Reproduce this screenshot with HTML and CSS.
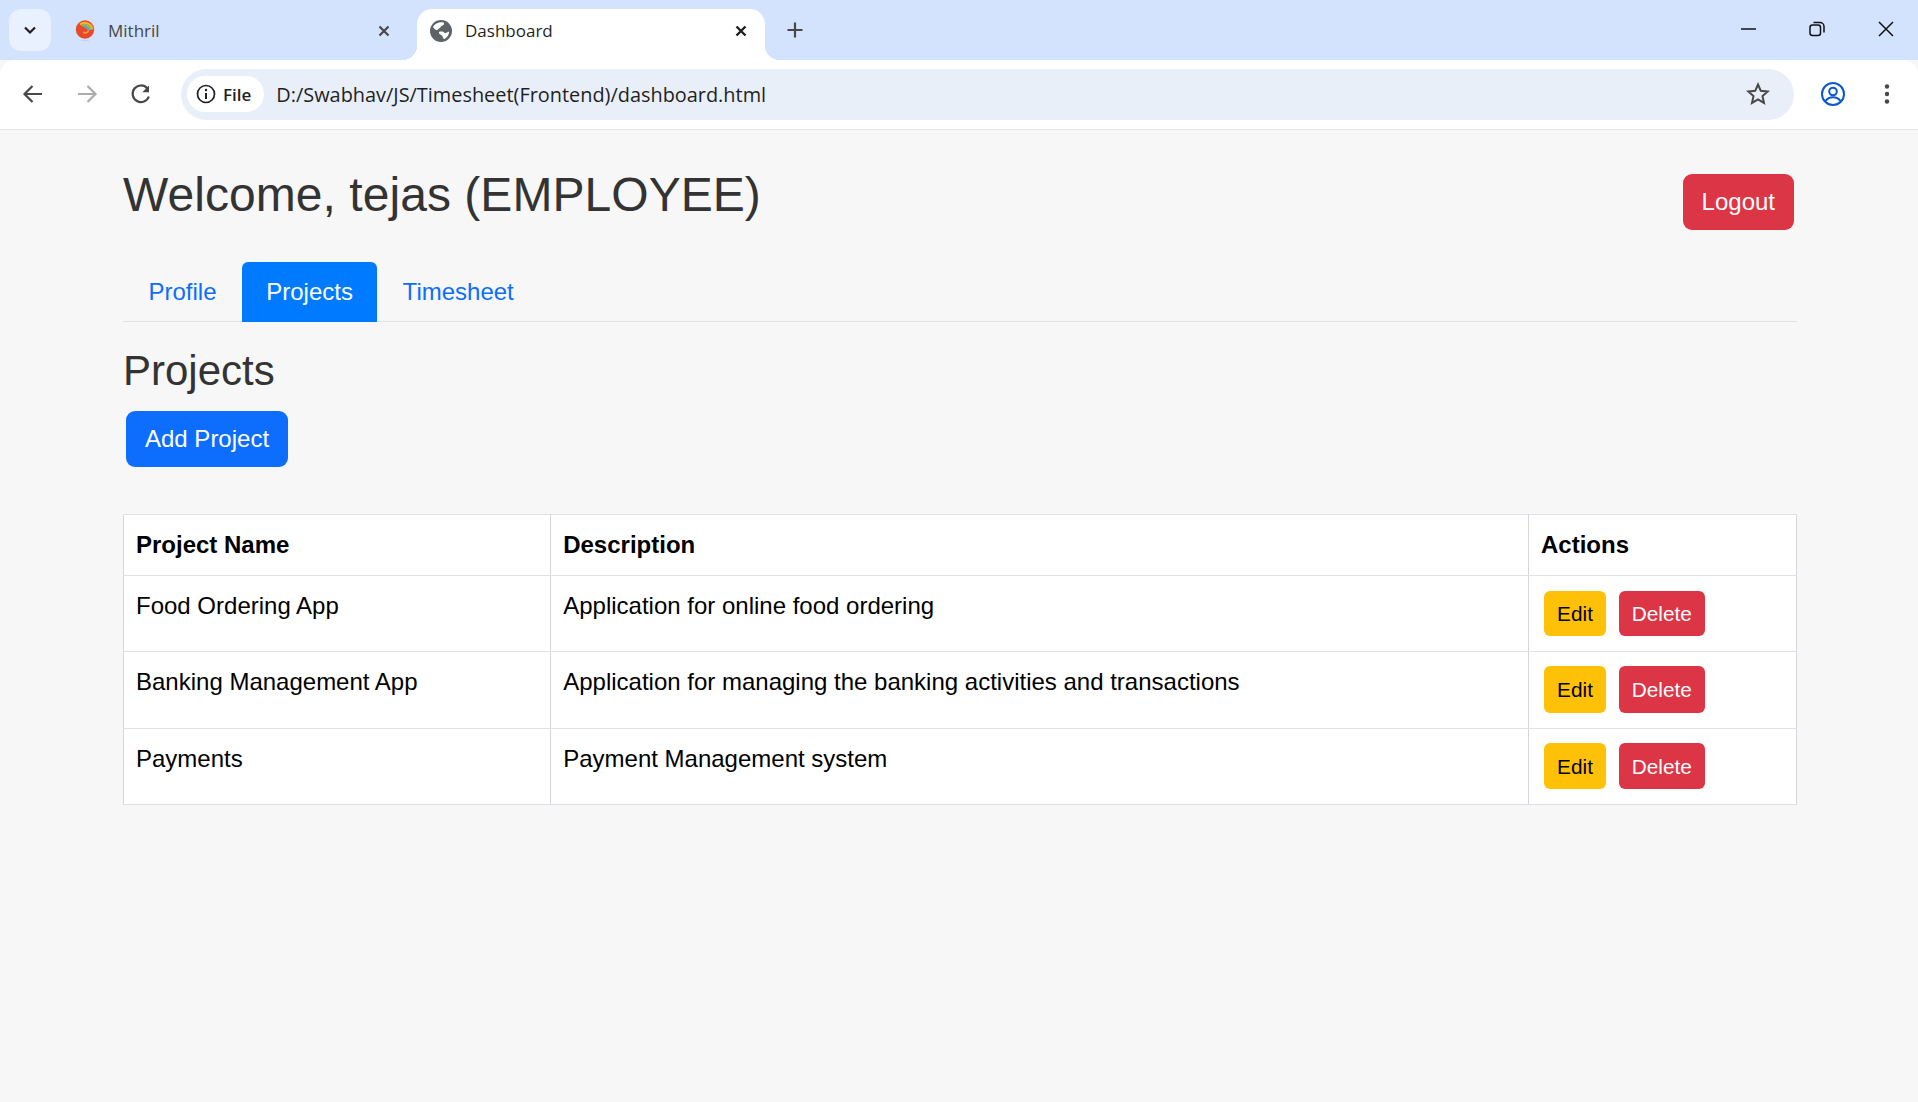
FILE: index.html
```html
<!DOCTYPE html>
<html lang="en">
<head>
    <meta charset="UTF-8">
    <title>Dashboard</title>
    <link rel="stylesheet" href="styles.css">
</head>
<body>
    <div class="tabstrip">
        <div class="tab-search">
            <svg width="18" height="18" viewBox="0 0 18 18"><path d="M4 6.500l5 5 5-5" fill="none" stroke="#1f1f1f" stroke-width="2.200"/></svg>
        </div>
        <div class="tab">
            <svg class="favicon" width="20" height="22" viewBox="0 0 20 22">
                <circle cx="10" cy="9.500" r="9.200" fill="#e8492a"/>
                <path d="M5 4.500a8 8 0 0 1 12.500 5" fill="none" stroke="#f3b32e" stroke-width="2.200"/>
                <path d="M7 6a5.500 5.500 0 0 1 8.500 4" fill="none" stroke="#8cc05a" stroke-width="2"/>
                <path d="M9 7.500a3.200 3.200 0 0 1 4.500 3" fill="none" stroke="#58aedb" stroke-width="1.800"/>
                <path d="M13.500 10.500c-.5 2-3 3-5.500 1.800" fill="none" stroke="#f6a33a" stroke-width="1.500"/>
                <path d="M6 20.500h8" stroke="#c9d3e2" stroke-width="1"/>
            </svg>
            <span class="tab-title">Mithril</span>
            <svg class="tab-close" width="24" height="24" viewBox="0 0 24 24"><path d="M7.500 7.500l9 9m0-9l-9 9" stroke="#474747" stroke-width="2.200"/></svg>
        </div>
        <div class="tab tab-active">
            <svg class="globe" width="22" height="22" viewBox="0 0 22 22">
                <circle cx="11" cy="11" r="11" fill="#5f6368"/>
                <path d="M6.500 3.500c2-1 5-1.500 7-1 1.500 1.500-.5 3-2 3.500-1 .5-1 2-2.500 2.500-1 .5-1.500 2-3 1.500C4.500 9 3.500 8 3 7c.8-1.500 2-2.800 3.500-3.500z" fill="#fff"/>
                <path d="M9 12c2-.8 4.500-.3 5.500 1 1 .5 3-1 4.500-1.500.5 2-1.500 6-4.500 7.500-1 .2-1.500-1-2-2.500-.5-1.500-2-1.500-3-2.500-.5-.7-.7-1.500-.5-2z" fill="#fff"/>
            </svg>
            <span class="tab-title">Dashboard</span>
            <svg class="tab-close" width="24" height="24" viewBox="0 0 24 24"><path d="M7.500 7.500l9 9m0-9l-9 9" stroke="#1f1f1f" stroke-width="2.400"/></svg>
        </div>
        <svg class="new-tab" width="24" height="24" viewBox="0 0 24 24"><path d="M12 4.500v15M4.500 12h15" stroke="#474747" stroke-width="2.200"/></svg>
        <div class="window-controls">
            <div class="window-btn"><svg width="18" height="18" viewBox="0 0 18 18"><path d="M2 9h15" stroke="#111" stroke-width="1.500"/></svg></div>
            <div class="window-btn"><svg width="18" height="18" viewBox="0 0 18 18"><rect x="2" y="5" width="10.500" height="10.500" rx="2.500" fill="none" stroke="#111" stroke-width="1.500"/><path d="M5.500 2.500h6.500a4 4 0 0 1 4 4v6" fill="none" stroke="#111" stroke-width="1.500"/></svg></div>
            <div class="window-btn"><svg width="18" height="18" viewBox="0 0 18 18"><path d="M2 2l14 14m0-14L2 16" stroke="#111" stroke-width="1.500"/></svg></div>
        </div>
    </div>

    <div class="toolbar">
        <svg class="tool-icon" width="36" height="36" viewBox="0 0 36 36"><path d="M27 18H10m7.500-8L9.500 18l8 8" fill="none" stroke="#474747" stroke-width="2.200"/></svg>
        <svg class="tool-icon" width="36" height="36" viewBox="0 0 36 36"><path d="M9 18h17m-7.500-8l8 8-8 8" fill="none" stroke="#adadad" stroke-width="2.200"/></svg>
        <svg class="tool-icon" width="36" height="36" viewBox="0 0 36 36"><path d="M25.800 20.500a8.300 8.300 0 1 1-1.600-8.200" fill="none" stroke="#474747" stroke-width="2.200"/><path d="M26 9.500v6.700h-6.700z" fill="#474747"/></svg>
        <div class="omnibox">
            <div class="chip">
                <svg width="20" height="20" viewBox="0 0 20 20"><circle cx="10" cy="10" r="8.500" fill="none" stroke="#1f1f1f" stroke-width="1.700"/><path d="M10 9v6" stroke="#1f1f1f" stroke-width="2"/><circle cx="10" cy="6" r="1.200" fill="#1f1f1f"/></svg>
                <span>File</span>
            </div>
            <span class="url">D:/Swabhav/JS/Timesheet(Frontend)/dashboard.html</span>
            <svg class="star" width="24" height="24" viewBox="0 0 24 24"><path d="M12 2.500l2.800 6.300 6.900.7-5.200 4.600 1.500 6.800-6-3.500-6 3.500 1.500-6.800-5.200-4.600 6.900-.7z" fill="none" stroke="#474747" stroke-width="2"/></svg>
        </div>
        <svg class="profile" width="26" height="26" viewBox="0 0 26 26"><circle cx="13" cy="13" r="11" fill="none" stroke="#0b57d0" stroke-width="2"/><circle cx="13" cy="10.500" r="3.800" fill="none" stroke="#0b57d0" stroke-width="2"/><path d="M5.500 20c2-2.800 4.500-3.800 7.500-3.800s5.500 1 7.500 3.800" fill="none" stroke="#0b57d0" stroke-width="2"/></svg>
        <svg class="menu" width="36" height="36" viewBox="0 0 36 36"><circle cx="18" cy="10.500" r="2.200" fill="#474747"/><circle cx="18" cy="18" r="2.200" fill="#474747"/><circle cx="18" cy="25.500" r="2.200" fill="#474747"/></svg>
    </div>

    <div class="container">
        <div class="page-header">
            <h1>Welcome, tejas (EMPLOYEE)</h1>
            <button type="button" class="btn btn-danger btn-logout">Logout</button>
        </div>
        <ul class="nav-tabs">
            <li class="nav-link">Profile</li>
            <li class="nav-link active">Projects</li>
            <li class="nav-link">Timesheet</li>
        </ul>
        <h3>Projects</h3>
        <button type="button" class="btn btn-primary btn-add">Add Project</button>
        <table class="project-table">
            <colgroup>
                <col class="col-name">
                <col class="col-desc">
                <col class="col-actions">
            </colgroup>
            <thead>
                <tr>
                    <th>Project Name</th>
                    <th>Description</th>
                    <th>Actions</th>
                </tr>
            </thead>
            <tbody>
                <tr>
                    <td>Food Ordering App</td>
                    <td>Application for online food ordering</td>
                    <td><div class="actions"><button type="button" class="btn btn-sm btn-warning">Edit</button><button type="button" class="btn btn-sm btn-danger">Delete</button></div></td>
                </tr>
                <tr>
                    <td>Banking Management App</td>
                    <td>Application for managing the banking activities and transactions</td>
                    <td><div class="actions"><button type="button" class="btn btn-sm btn-warning">Edit</button><button type="button" class="btn btn-sm btn-danger">Delete</button></div></td>
                </tr>
                <tr>
                    <td>Payments</td>
                    <td>Payment Management system</td>
                    <td><div class="actions"><button type="button" class="btn btn-sm btn-warning">Edit</button><button type="button" class="btn btn-sm btn-danger">Delete</button></div></td>
                </tr>
            </tbody>
        </table>
    </div>
</body>
</html>
```

FILE: styles.css
```css
* {
    box-sizing: border-box;
}
html, body {
    height: 100%;
}
body {
    margin: 0;
    background-color: #f7f7f7;
    font-family: "Liberation Sans", Arial, sans-serif;
    overflow: hidden;
}

/* browser chrome */
.tabstrip {
    display: flex;
    align-items: flex-start;
    height: 60px;
    background-color: #d3e3fd;
    font-family: "Open Sans", "Noto Sans", sans-serif;
}
.tab-search {
    display: flex;
    align-items: center;
    justify-content: center;
    width: 42px;
    height: 42px;
    margin: 9px 18px 0 9px;
    background-color: #e9f0fe;
    border-radius: 12px;
}
.tab {
    position: relative;
    display: flex;
    align-items: center;
    width: 339px;
    height: 51px;
    margin: 9px 9px 0 0;
    padding: 0 12px 8px 6px;
    color: #474747;
    font-size: 17px;
}
.tab-title {
    flex: 1;
    margin-left: 13px;
}
.tab-active {
    width: 348px;
    margin-right: 0;
    padding-left: 13px;
    background-color: #fff;
    border-radius: 15px 15px 0 0;
    color: #1f1f1f;
}
.tab-active::before,
.tab-active::after {
    content: "";
    position: absolute;
    bottom: 0;
    width: 15px;
    height: 15px;
}
.tab-active::before {
    left: -15px;
    background: radial-gradient(circle at 0 0, #d3e3fd 15px, #fff 15.500px);
}
.tab-active::after {
    right: -15px;
    background: radial-gradient(circle at 100% 0, #d3e3fd 15px, #fff 15.500px);
}
.new-tab {
    margin: 18px 0 0 18px;
}
.window-controls {
    display: flex;
    margin-left: auto;
    margin-right: -2px;
}
.window-btn {
    display: flex;
    align-items: center;
    justify-content: center;
    width: 69px;
    height: 58px;
}
.toolbar {
    display: flex;
    align-items: center;
    gap: 18px;
    height: 70px;
    padding: 0 13px 1px 15px;
    background-color: #fff;
    border-bottom: 1px solid #e3e3e3;
    border-radius: 15px 15px 0 0;
    font-family: "Open Sans", "Noto Sans", sans-serif;
}
.omnibox {
    flex: 1;
    display: flex;
    align-items: center;
    height: 51px;
    margin-left: 4px;
    padding: 0 24px 0 6px;
    background-color: #e9eff9;
    border-radius: 26px;
}
.chip {
    display: flex;
    align-items: center;
    gap: 7px;
    height: 36px;
    padding: 0 13px 0 9px;
    background-color: #fff;
    border-radius: 18px;
    color: #1f1f1f;
    font-size: 17px;
    font-weight: 600;
}
.url {
    flex: 1;
    margin-left: 12px;
    color: #1f1f1f;
    font-size: 19.900px;
}
.profile {
    margin-left: 8px;
}
.menu {
    margin-left: 5px;
}

/* page content */
.container {
    padding: 0 121px 0 123px;
}
.page-header {
    display: flex;
    align-items: flex-start;
    justify-content: space-between;
    padding: 36px 3px 0 0;
    height: 132px;
}
h1 {
    margin: 0;
    color: #333;
    font-size: 48px;
    font-weight: 400;
    line-height: 1.2;
    letter-spacing: 0.05px;
}
.btn {
    display: inline-block;
    border: 1.500px solid transparent;
    border-radius: 9px;
    font-family: inherit;
    font-size: 24px;
    line-height: 1.5;
    padding: 0 18px;
    height: 56px;
}
.btn-sm {
    height: 45.500px;
    padding: 0 11.700px;
    border-radius: 6px;
    font-size: 20.800px;
}
.btn-logout {
    margin-top: 8px;
}
.btn-danger {
    background-color: #dc3545;
    color: #fff;
}
.btn-primary {
    background-color: #0d6efd;
    color: #fff;
}
.btn-warning {
    padding: 0 12.100px;
    background-color: #ffc107;
    color: #000;
}
.nav-tabs {
    display: flex;
    height: 60px;
    margin: 0;
    padding: 0;
    list-style: none;
    border-bottom: 1.500px solid #dee2e6;
}
.nav-link {
    height: 60px;
    padding: 12px 25.500px;
    color: #0d6efd;
    font-size: 24px;
    line-height: 36px;
}
.nav-link.active {
    padding: 12px 24.200px;
    background-color: #007bff;
    border-radius: 6px 6px 0 0;
    color: #fff;
}
h3 {
    margin: 0;
    padding-top: 24px;
    height: 89px;
    color: #333;
    font-size: 42px;
    font-weight: 400;
    line-height: 1.2;
}
.btn-add {
    display: block;
    margin-left: 3px;
}
.project-table {
    width: 1674px;
    margin-top: 47px;
    border-collapse: collapse;
    table-layout: fixed;
    background-color: #fff;
    color: #000;
    font-size: 24px;
    line-height: 36px;
}
.col-name {
    width: 427.200px;
}
.col-desc {
    width: 977.800px;
}
.project-table th,
.project-table td {
    padding: 12px;
    border: 1.500px solid #d5d6db;
    border-top-color: #dee2e6;
    border-bottom-color: #dee2e6;
    text-align: left;
    vertical-align: top;
}
.project-table tbody tr:nth-child(2) .btn-sm {
    height: 47px;
}
.actions {
    display: flex;
    gap: 13px;
    padding: 2.600px 3px;
}
```
